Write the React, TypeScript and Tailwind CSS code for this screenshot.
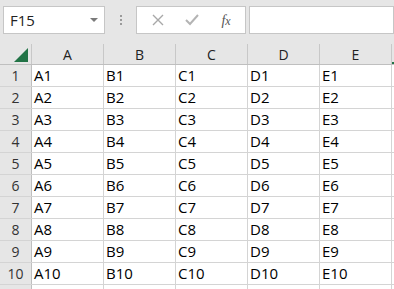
import React from "react";

const COLS = ["A", "B", "C", "D", "E"];
const ROWS = [1, 2, 3, 4, 5, 6, 7, 8, 9, 10];

const font = { fontFamily: '"Segoe UI", "Open Sans", "Noto Sans", sans-serif' };

function FormulaBar() {
  return (
    <div className="flex h-[44px] items-start bg-[#e6e6e6] pt-[6px] pl-[3px]">
      {/* Name box */}
      <div className="flex h-[28px] w-[102px] items-center justify-between border border-[#c6c6c6] bg-white pl-[6px] pr-[6px]">
        <span className="text-[15px] text-[#222]">F15</span>
        <svg width="8" height="4" viewBox="0 0 8 4">
          <path d="M0 0 L8 0 L4 4 Z" fill="#7a7a7a" />
        </svg>
      </div>
      {/* dots */}
      <div className="flex h-[28px] w-[31px] flex-col items-center justify-center gap-[2px]">
        <span className="h-[2px] w-[2px] bg-[#9a9a9a]" />
        <span className="h-[2px] w-[2px] bg-[#9a9a9a]" />
        <span className="h-[2px] w-[2px] bg-[#9a9a9a]" />
      </div>
      {/* cancel / enter / fx */}
      <div className="flex h-[28px] w-[110px] items-center border border-[#c6c6c6] bg-white">
        <div className="flex w-[38px] justify-center pl-[4px]">
          <svg width="12" height="12" viewBox="0 0 12 12">
            <path d="M1 1 L11 11 M11 1 L1 11" stroke="#a8a8a8" strokeWidth="1.4" />
          </svg>
        </div>
        <div className="flex w-[34px] justify-center">
          <svg width="14" height="12" viewBox="0 0 14 12">
            <path d="M1 6 L5 10 L13 1" stroke="#b4b4b4" strokeWidth="2" fill="none" />
          </svg>
        </div>
        <div className="flex flex-1 justify-center pr-[2px]">
          <span
            className="text-[14px] italic text-[#555]"
            style={{ fontFamily: '"Liberation Serif", "DejaVu Serif", serif' }}
          >
            f<span className="text-[12px]">x</span>
          </span>
        </div>
      </div>
      {/* formula input */}
      <div className="ml-[3px] h-[28px] flex-1 border border-[#c6c6c6] bg-white" />
    </div>
  );
}

function Grid() {
  return (
    <div className="bg-white">
      {/* column headers */}
      <div className="flex h-[21px] border-b border-[#bfbfbf] bg-[#e6e6e6]">
        <div className="relative w-[32px] shrink-0 border-r border-[#c8c8c8]">
          <svg className="absolute right-[3px] bottom-[2px]" width="14" height="14" viewBox="0 0 14 14">
            <path d="M14 0 L14 14 L0 14 Z" fill="#217346" />
          </svg>
        </div>
        {COLS.map((c) => (
          <div
            key={c}
            className="flex w-[72px] shrink-0 items-center justify-center border-r border-[#c8c8c8] text-[14px] text-[#222]"
          >
            {c}
          </div>
        ))}
        <div className="flex-1 border-b-2 border-[#217346]" />
      </div>
      {ROWS.map((r) => (
        <div key={r} className="flex h-[22px] border-b border-[#d4d4d4]">
          <div className="flex w-[32px] shrink-0 items-center justify-center border-r border-[#bfbfbf] bg-[#e6e6e6] text-[14px] text-[#333]">
            {r}
          </div>
          {COLS.map((c) => (
            <div
              key={c}
              className="flex w-[72px] shrink-0 items-center border-r border-[#d4d4d4] pl-[2px] text-[15px] text-black"
            >
              {c}
              {r}
            </div>
          ))}
          <div className="flex-1" />
        </div>
      ))}
      <div className="flex h-[10px]">
        <div className="w-[32px] shrink-0 border-r border-[#bfbfbf] bg-[#e6e6e6]" />
        {COLS.map((c) => (
          <div key={c} className="w-[72px] shrink-0 border-r border-[#d4d4d4]" />
        ))}
      </div>
    </div>
  );
}

export default function App() {
  return (
    <div className="h-[289px] w-[394px] overflow-hidden bg-white" style={font}>
      <FormulaBar />
      <Grid />
    </div>
  );
}
